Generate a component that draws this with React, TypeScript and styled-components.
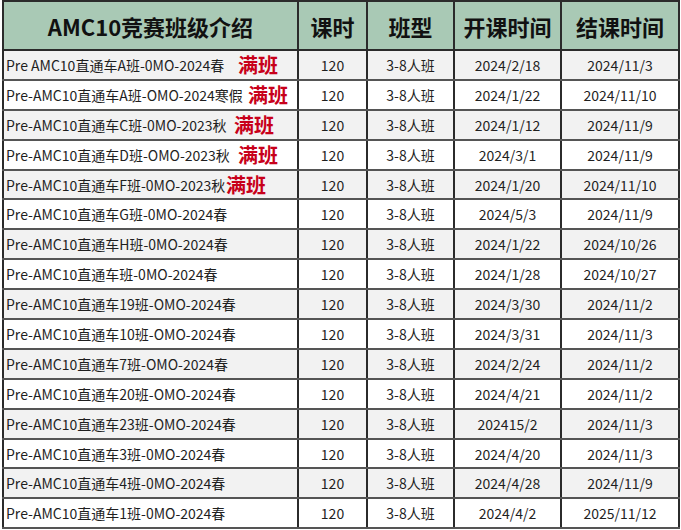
import styled, { createGlobalStyle } from "styled-components";

const GlobalStyle = createGlobalStyle`
  html, body {
    margin: 0;
    padding: 0;
    background: #fff;
  }
  body {
    font-family: "Noto Sans CJK SC", "Noto Sans", sans-serif;
    color: #1f1f1f;
    overflow: hidden;
  }
`;

interface Course {
  name: string;
  full?: number;
  hours: string;
  type: string;
  start: string;
  end: string;
}

const COURSES: Course[] = [
  { name: "Pre AMC10直通车A班-0MO-2024春", full: 233, hours: "120", type: "3-8人班", start: "2024/2/18", end: "2024/11/3" },
  { name: "Pre-AMC10直通车A班-OMO-2024寒假", full: 243, hours: "120", type: "3-8人班", start: "2024/1/22", end: "2024/11/10" },
  { name: "Pre-AMC10直通车C班-0MO-2023秋", full: 229, hours: "120", type: "3-8人班", start: "2024/1/12", end: "2024/11/9" },
  { name: "Pre-AMC10直通车D班-OMO-2023秋", full: 233, hours: "120", type: "3-8人班", start: "2024/3/1", end: "2024/11/9" },
  { name: "Pre-AMC10直通车F班-0MO-2023秋", full: 221, hours: "120", type: "3-8人班", start: "2024/1/20", end: "2024/11/10" },
  { name: "Pre-AMC10直通车G班-0MO-2024春", hours: "120", type: "3-8人班", start: "2024/5/3", end: "2024/11/9" },
  { name: "Pre-AMC10直通车H班-0MO-2024春", hours: "120", type: "3-8人班", start: "2024/1/22", end: "2024/10/26" },
  { name: "Pre-AMC10直通车班-0MO-2024春", hours: "120", type: "3-8人班", start: "2024/1/28", end: "2024/10/27" },
  { name: "Pre-AMC10直通车19班-OMO-2024春", hours: "120", type: "3-8人班", start: "2024/3/30", end: "2024/11/2" },
  { name: "Pre-AMC10直通车10班-OMO-2024春", hours: "120", type: "3-8人班", start: "2024/3/31", end: "2024/11/3" },
  { name: "Pre-AMC10直通车7班-OMO-2024春", hours: "120", type: "3-8人班", start: "2024/2/24", end: "2024/11/2" },
  { name: "Pre-AMC10直通车20班-OMO-2024春", hours: "120", type: "3-8人班", start: "2024/4/21", end: "2024/11/2" },
  { name: "Pre-AMC10直通车23班-OMO-2024春", hours: "120", type: "3-8人班", start: "202415/2", end: "2024/11/3" },
  { name: "Pre-AMC10直通车3班-0MO-2024春", hours: "120", type: "3-8人班", start: "2024/4/20", end: "2024/11/3" },
  { name: "Pre-AMC10直通车4班-0MO-2024春", hours: "120", type: "3-8人班", start: "2024/4/28", end: "2024/11/9" },
  { name: "Pre-AMC10直通车1班-0MO-2024春", hours: "120", type: "3-8人班", start: "2024/4/2", end: "2025/11/12" },
];

const HEADERS = ["AMC10竞赛班级介绍", "课时", "班型", "开课时间", "结课时间"];
const WIDTHS = [295, 69, 87, 107, 118];

const App = () => {
  return (
    <>
      <GlobalStyle />
      <Sheet>
        <colgroup>
          {WIDTHS.map((w, i) => (
            <col key={i} style={{ width: w }} />
          ))}
        </colgroup>
        <thead>
          <tr>
            {HEADERS.map((h) => (
              <HeadCell key={h}>{h}</HeadCell>
            ))}
          </tr>
        </thead>
        <tbody>
          {COURSES.map((c, i) => (
            <Row key={i} $striped={i % 2 === 0}>
              <NameCell>
                {c.name}
                {c.full !== undefined && <FullTag style={{ left: c.full }}>满班</FullTag>}
              </NameCell>
              <Cell>{c.hours}</Cell>
              <Cell>{c.type}</Cell>
              <Cell>{c.start}</Cell>
              <Cell>{c.end}</Cell>
            </Row>
          ))}
        </tbody>
      </Sheet>
    </>
  );
};

export default App;

const Sheet = styled.table`
  margin-left: 2px;
  border-collapse: collapse;
  table-layout: fixed;
  width: 676px;
  border: 2px solid #2b2b2b;
`;

const HeadCell = styled.th`
  height: 47px;
  padding: 0;
  background: #a9c9b5;
  border: 2px solid #2b2b2b;
  font-size: 22px;
  font-weight: 700;
  color: #111;
  text-align: center;
  vertical-align: middle;
  white-space: nowrap;
`;

const Row = styled.tr<{ $striped: boolean }>`
  height: 29.9px;
  background: ${(p) => (p.$striped ? "#f2f2f2" : "#ffffff")};
`;

const Cell = styled.td`
  padding: 0;
  border-left: 2px solid #2b2b2b;
  border-right: 2px solid #2b2b2b;
  border-bottom: 2px solid #555;
  font-size: 14px;
  text-align: center;
  vertical-align: middle;
  white-space: nowrap;
  line-height: 1;
`;

const NameCell = styled(Cell)`
  position: relative;
  padding-left: 2px;
  text-align: left;
  overflow: hidden;
`;

const FullTag = styled.span`
  position: absolute;
  top: 50%;
  transform: translateY(-52%);
  padding: 0 1px;
  background: inherit;
  color: #c8001a;
  font-size: 20px;
  font-weight: 700;
  line-height: 1.2;
`;
